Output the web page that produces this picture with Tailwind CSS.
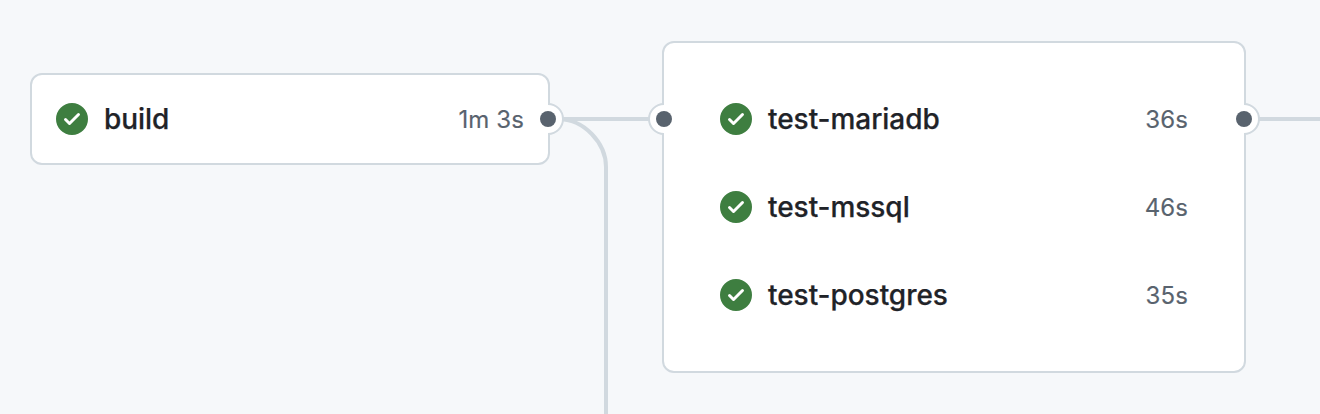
<!DOCTYPE html>
<html lang="en">
<head>
<meta charset="utf-8">
<title>Workflow graph</title>
<script src="https://cdn.jsdelivr.net/npm/@tailwindcss/browser@4"></script>
</head>
<body class="relative h-[414px] w-[1320px] overflow-hidden bg-[#f6f8fa] font-['Inter',sans-serif] text-[#1f2328]">
<svg class="absolute inset-0" width="1320" height="414" fill="none" stroke="#d1d9df" stroke-width="4">
<path d="M548 119H664M1244 119H1320M558 119C584 119 606 143 606 167V414"/>
</svg>
<section class="absolute left-[30px] top-[73px] flex h-[92px] w-[520px] items-center rounded-xl border-2 border-[#d1d9df] bg-white px-6">
<svg class="size-8 shrink-0" viewBox="0 0 16 16" fill="#3e7e40"><path d="M8 16A8 8 0 1 1 8 0a8 8 0 0 1 0 16Zm3.78-9.72a.751.751 0 0 0-.018-1.042.751.751 0 0 0-1.042-.018L6.75 9.19 5.28 7.72a.751.751 0 0 0-1.042.018.751.751 0 0 0-.018 1.042l2 2a.75.75 0 0 0 1.06 0Z"/></svg>
<span class="ml-4 text-[28px] font-medium leading-8 tracking-[-0.05px] [-webkit-text-stroke:0.25px]">build</span>
<span class="ml-auto pt-0.5 text-2xl tracking-[0.1px] text-[#59636e] [-webkit-text-stroke:0.15px]">1m 3s</span>
</section>
<section class="absolute left-[662px] top-[41px] flex h-[332px] w-[584px] flex-col rounded-xl border-2 border-[#d1d9df] bg-white px-14 py-8">
<div class="flex h-[88px] items-center">
<svg class="size-8 shrink-0" viewBox="0 0 16 16" fill="#3e7e40"><path d="M8 16A8 8 0 1 1 8 0a8 8 0 0 1 0 16Zm3.78-9.72a.751.751 0 0 0-.018-1.042.751.751 0 0 0-1.042-.018L6.75 9.19 5.28 7.72a.751.751 0 0 0-1.042.018.751.751 0 0 0-.018 1.042l2 2a.75.75 0 0 0 1.06 0Z"/></svg>
<span class="ml-4 text-[28px] font-medium leading-8 tracking-[-0.05px] [-webkit-text-stroke:0.25px]">test-mariadb</span>
<span class="ml-auto pt-0.5 text-2xl tracking-[0.1px] text-[#59636e] [-webkit-text-stroke:0.15px]">36s</span>
</div>
<div class="flex h-[88px] items-center">
<svg class="size-8 shrink-0" viewBox="0 0 16 16" fill="#3e7e40"><path d="M8 16A8 8 0 1 1 8 0a8 8 0 0 1 0 16Zm3.78-9.72a.751.751 0 0 0-.018-1.042.751.751 0 0 0-1.042-.018L6.75 9.19 5.28 7.72a.751.751 0 0 0-1.042.018.751.751 0 0 0-.018 1.042l2 2a.75.75 0 0 0 1.06 0Z"/></svg>
<span class="ml-4 text-[28px] font-medium leading-8 tracking-[-0.05px] [-webkit-text-stroke:0.25px]">test-mssql</span>
<span class="ml-auto pt-0.5 text-2xl tracking-[0.1px] text-[#59636e] [-webkit-text-stroke:0.15px]">46s</span>
</div>
<div class="flex h-[88px] items-center">
<svg class="size-8 shrink-0" viewBox="0 0 16 16" fill="#3e7e40"><path d="M8 16A8 8 0 1 1 8 0a8 8 0 0 1 0 16Zm3.78-9.72a.751.751 0 0 0-.018-1.042.751.751 0 0 0-1.042-.018L6.75 9.19 5.28 7.72a.751.751 0 0 0-1.042.018.751.751 0 0 0-.018 1.042l2 2a.75.75 0 0 0 1.06 0Z"/></svg>
<span class="ml-4 text-[28px] font-medium leading-8 tracking-[-0.05px] [-webkit-text-stroke:0.25px]">test-postgres</span>
<span class="ml-auto pt-0.5 text-2xl tracking-[0.1px] text-[#59636e] [-webkit-text-stroke:0.15px]">35s</span>
</div>
</section>
<svg class="absolute inset-0" width="1320" height="414">
<g fill="#fff"><circle cx="548" cy="119" r="14.5"/><circle cx="664" cy="119" r="14.5"/><circle cx="1244" cy="119" r="14.5"/></g>
<g fill="none" stroke="#d1d9df" stroke-width="2"><path d="M548 104A15 15 0 0 1 548 134M664 104A15 15 0 0 0 664 134M1244 104A15 15 0 0 1 1244 134"/></g>
<g fill="#59636e"><circle cx="548" cy="119" r="8"/><circle cx="664" cy="119" r="8"/><circle cx="1244" cy="119" r="8"/></g>
</svg>
</body>
</html>
